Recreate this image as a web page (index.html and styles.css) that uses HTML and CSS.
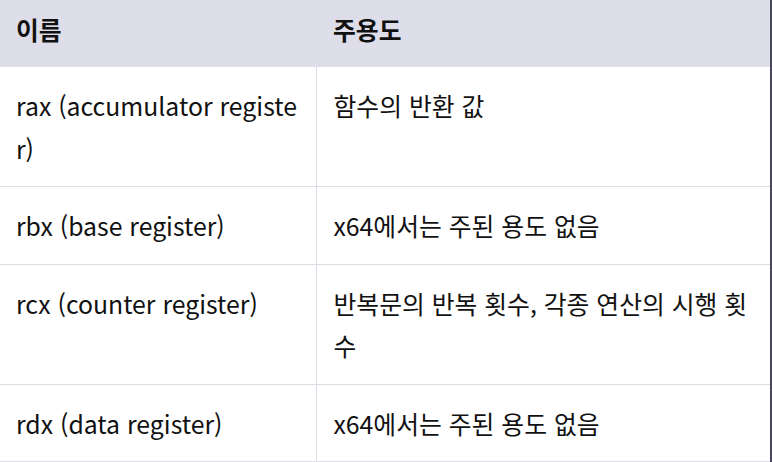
FILE: index.html
```html
<!DOCTYPE html>
<html lang="ko">
<head>
<meta charset="utf-8">
<link rel="stylesheet" href="styles.css">
</head>
<body>
<div class="frame">
  <table class="reg-table">
    <thead>
      <tr><th class="col-name">이름</th><th>주용도</th></tr>
    </thead>
    <tbody>
      <tr><td>rax (accumulator register)</td><td>함수의 반환 값</td></tr>
      <tr><td>rbx (base register)</td><td>x64에서는 주된 용도 없음</td></tr>
      <tr><td>rcx (counter register)</td><td>반복문의 반복 횟수, 각종 연산의 시행 횟수</td></tr>
      <tr><td>rdx (data register)</td><td>x64에서는 주된 용도 없음</td></tr>
    </tbody>
  </table>
</div>
</body>
</html>
```
FILE: styles.css
```css
html, body {
  margin: 0;
  padding: 0;
  background: #ffffff;
  overflow: hidden;
}
.frame {
  width: 770px;
  height: 462px;
  border-right: 2px solid #46455a;
  overflow: hidden;
}
.reg-table {
  margin-top: -9.5px;
  width: 770px;
  border-collapse: collapse;
  table-layout: fixed;
  font-family: "Noto Sans CJK KR", "Noto Sans", sans-serif;
  font-size: 24.8px;
  line-height: 42.5px;
  color: #111111;
  word-break: break-all;
}
.reg-table th, .reg-table td {
  text-align: left;
  vertical-align: top;
  padding: 17px 15px 17px 17px;
  border-bottom: 1px solid #dcdce6;
}
.reg-table th:first-child, .reg-table td:first-child {
  padding-left: 16px;
}
.reg-table th {
  background: #dedeea;
  font-weight: 700;
  border-bottom: none;
}
.reg-table td:first-child {
  border-right: 1px solid #dcdce6;
}
.col-name {
  width: 285px;
}
```
